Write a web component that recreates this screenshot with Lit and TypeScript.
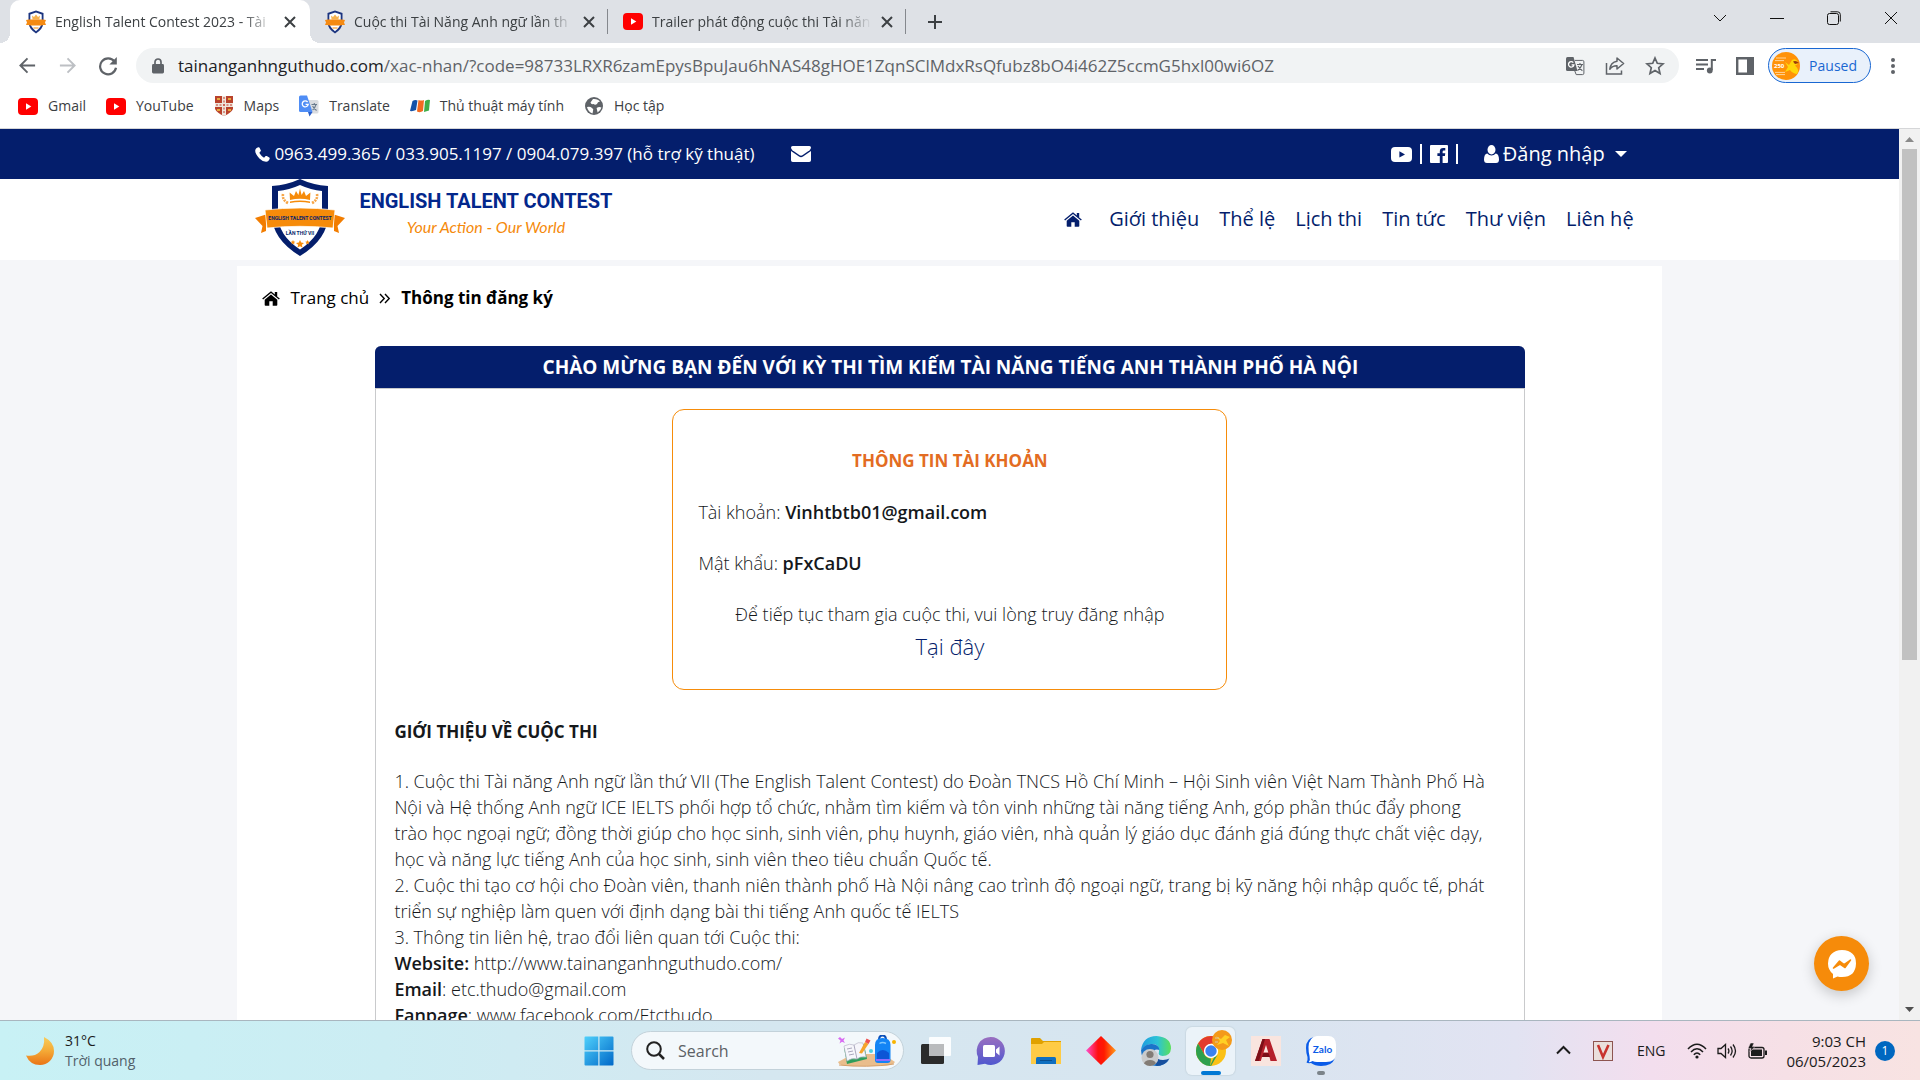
import { LitElement, html, css, svg } from "lit";
import { customElement } from "lit/decorators.js";

const crest = html`<svg class="crest" viewBox="0 0 20 24" width="20" height="24" aria-hidden="true">
  <path d="M10 0.5 L17.5 3 V13 Q17 19 10 23.5 Q3 19 2.5 13 V3 Z" fill="#1c3580" />
  <path d="M10 2.6 L15.7 4.5 V13 Q15 17.6 10 21.2 Q5 17.6 4.3 13 V4.5 Z" fill="#fff" />
  <path d="M6 5.5 l2 1.5 2-2.6 2 2.6 2-1.5 -.6 4 h-6.8z" fill="#f6b24e" />
  <path d="M0 10 L3 9.4 H17 L20 10 19 12.6 20 15 H17 L16.6 15.4 H3.4 L3 15 H0 L1 12.6Z" fill="#f58a12" />
  <path d="M7.5 18h5" stroke="#f6a94e" stroke-width="1.4" />
</svg>`;

const youtube = html`<svg viewBox="0 0 20 17" width="20" height="17" aria-hidden="true">
  <rect width="20" height="17" rx="4" fill="#f00" />
  <path d="M8 5.2 L13.3 8.5 L8 11.8Z" fill="#fff" />
</svg>`;

const closeX = html`<svg viewBox="0 0 12 12" width="12" height="12" aria-hidden="true">
  <path d="M1 1 L11 11 M11 1 L1 11" stroke="#3c4043" stroke-width="2" fill="none" />
</svg>`;

const homeIcon = html`<svg viewBox="0 0 18 15" width="18" height="15" fill="currentColor" aria-hidden="true">
  <path d="M9 3.6 L15.3 8.8 V14 Q15.3 14.8 14.5 14.8 H10.7 V10.2 H7.3 V14.8 H3.5 Q2.7 14.8 2.7 14 V8.8Z" />
  <path d="M9 0.3 L12.8 3.4 V1 H15.2 V5.4 L17.8 7.5 L16.9 8.6 L9 2.1 L1.1 8.6 L0.2 7.5Z" />
</svg>`;

const stroke = (d: string, w: number, width = 1.8, vb = 20) =>
  html`<svg viewBox="0 0 ${vb} ${vb}" width=${w} height=${w} fill="none" stroke="currentColor" stroke-width=${width} aria-hidden="true">
    <path d=${d} />
  </svg>`;

@customElement("browser-chrome")
export class BrowserChrome extends LitElement {
  static styles = css`
    :host {
      display: block;
      font: 14px/20px "Open Sans", "Noto Sans", sans-serif;
      color: #3c4043;
      background: #fff;
      border-bottom: 1px solid #d5d6d8;
    }
    svg { display: block; flex: none; }
    button, a { color: inherit; font: inherit; text-decoration: none; }
    button { border: 0; padding: 0; background: none; display: flex; }
    .strip { display: flex; height: 43px; background: #dee1e6; padding-left: 10px; }
    .tab {
      box-sizing: border-box;
      display: flex;
      align-items: center;
      width: 297px;
      padding: 0 12px 0 15px;
      gap: 9px;
    }
    .tab.active { position: relative; width: 300px; padding: 0 14px 0 16px; background: #fff; border-radius: 10px 10px 0 0; }
    .tab.active::before, .tab.active::after {
      content: "";
      position: absolute;
      bottom: 0;
      width: 10px;
      height: 10px;
    }
    .tab.active::before { left: -10px; background: radial-gradient(circle at 0 0, transparent 10px, #fff 10px); }
    .tab.active::after { right: -10px; background: radial-gradient(circle at 100% 0, transparent 10px, #fff 10px); }
    .tab .name {
      flex: 1;
      white-space: nowrap;
      -webkit-mask-image: linear-gradient(90deg, #000 85%, transparent);
      mask-image: linear-gradient(90deg, #000 85%, transparent);
    }
    .divider { align-self: center; width: 1px; height: 25px; background: #85888d; }
    .plus { align-self: center; margin-left: 21px; }
    .window { margin-left: auto; display: flex; gap: 43px; padding: 11px 22px 0 0; color: #111; align-items: flex-start; }
    .toolbar { display: flex; align-items: center; height: 45px; padding: 0 10px 0 18px; color: #5f6368; }
    .nav { display: flex; gap: 21px; margin-right: 18px; }
    .off { color: #bdc0c4; }
    .omnibox {
      flex: 1;
      display: flex;
      align-items: center;
      height: 35px;
      border-radius: 18px;
      background: #f1f3f4;
      padding: 0 14px 0 16px;
      gap: 14px;
    }
    .address { flex: 1; position: relative; display: flex; min-width: 0; }
    .address input {
      flex: 1;
      border: 0;
      outline: 0;
      background: none;
      padding: 0;
      font: 17px/24px "Open Sans", "Noto Sans", sans-serif;
      color: transparent;
    }
    .address .shown {
      position: absolute;
      inset: 0;
      font-size: 17px;
      line-height: 24px;
      white-space: nowrap;
      pointer-events: none;
    }
    .shown b { font-weight: 400; color: #202124; }
    .actions { display: flex; gap: 20px; }
    .side { display: flex; align-items: center; gap: 20px; margin: 0 14px 0 17px; }
    .paused {
      align-items: center;
      gap: 9px;
      box-sizing: border-box;
      height: 35px;
      padding: 0 13px 0 3px;
      border: 1px solid #1967d2;
      border-radius: 18px;
      background: #e9f1fb;
      color: #1967d2;
      font-size: 14px;
    }
    .dots { margin-left: 5px; }
    .marks { display: flex; align-items: flex-start; gap: 20px; height: 40px; padding: 0 18px; }
    .marks a { display: flex; align-items: center; gap: 10px; height: 36px; }
  `;

  private tab(name: string, icon: unknown, cls = "") {
    return html`<div class="tab ${cls}">
      ${icon}<span class="name">${name}</span>
      <button aria-label="Close tab">${closeX}</button>
    </div>`;
  }

  render() {
    return html`
      <div class="strip">
        ${this.tab("English Talent Contest 2023 - Tài", crest, "active")}
        ${this.tab("Cuộc thi Tài Năng Anh ngữ lần th", crest)}
        <span class="divider"></span>
        ${this.tab("Trailer phát động cuộc thi Tài năn", youtube)}
        <span class="divider"></span>
        <button class="plus" aria-label="New tab">${stroke("M8 1 V15 M1 8 H15", 16, 2, 16)}</button>
        <div class="window">
          <button aria-label="Search tabs">${stroke("M1 4 L7 10 L13 4", 14, 1, 14)}</button>
          <button aria-label="Minimize">${stroke("M0 7.5 H14", 14, 1, 14)}</button>
          <button aria-label="Restore">
            ${stroke("M2.5 2.5 H9.5 Q11.5 2.5 11.5 4.5 V11.5 Q11.5 13.5 9.5 13.5 H2.5 Q.5 13.5 .5 11.5 V4.5 Q.5 2.5 2.5 2.5Z M3.5 .8 H10.5 Q13.3 .8 13.3 3.5 V10.5", 14, 1, 14)}
          </button>
          <button aria-label="Close">${stroke("M1 1 L13 13 M13 1 L1 13", 14, 1, 14)}</button>
        </div>
      </div>
      <div class="toolbar">
        <div class="nav">
          <button aria-label="Back">${stroke("M18 10 H3 M10 2.5 L2.5 10 L10 17.5", 19, 2)}</button>
          <button class="off" aria-label="Forward">${stroke("M2 10 H17 M10 2.5 L17.5 10 L10 17.5", 19, 2)}</button>
          <button aria-label="Reload">
            <svg viewBox="0 0 20 20" width="20" height="20" fill="none" stroke="currentColor" stroke-width="2.2" aria-hidden="true">
              <path d="M16.5 5.5 A8 8 0 1 0 18 11.8" />
              <path d="M18.8 1 V8.4 H11.4Z" fill="currentColor" stroke="none" />
            </svg>
          </button>
        </div>
        <div class="omnibox">
          <svg viewBox="0 0 12 16" width="12" height="16" aria-hidden="true">
            <rect y="6" width="12" height="9.5" rx="1.4" fill="#5f6368" />
            <path d="M3 6.5 V4 a3 3 0 0 1 6 0 V6.5" fill="none" stroke="#5f6368" stroke-width="1.7" />
          </svg>
          <label class="address">
            <input aria-label="Address" />
            <span class="shown"><b>tainanganhnguthudo.com</b>/xac-nhan/?code=98733LRXR6zamEpysBpuJau6hNAS48gHOE1ZqnSClMdxRsQfubz8bO4i462Z5ccmG5hxl00wi6OZ</span>
          </label>
          <div class="actions">
            <button aria-label="Translate page">
              <svg viewBox="0 0 20 20" width="20" height="20" aria-hidden="true">
                <path d="M2.5 1 H8.5 L12.5 15 H2.5 Q1 15 1 13.5 V2.5 Q1 1 2.5 1Z" fill="#5f6368" />
                <path d="M9.8 4.4 H17.5 Q18.9 4.4 18.9 5.8 V17.2 Q18.9 18.6 17.5 18.6 H11.2 L9.8 15" fill="none" stroke="#5f6368" />
                <path d="M8.3 6.6 A2.7 2.7 0 1 0 8.9 8.8 H6.6" fill="none" stroke="#fff" stroke-width="1.3" />
                <path d="M12 8.5 H18 M15 7 V8.5 M17 8.5 Q16 12 12.6 14.5 M13 10 Q15 13 17.4 14.8" fill="none" stroke="#5f6368" stroke-width="1.1" />
              </svg>
            </button>
            <button aria-label="Share">
              <svg viewBox="0 0 20 20" width="20" height="20" fill="none" stroke="#5f6368" stroke-width="1.5" aria-hidden="true">
                <path d="M1.5 7 V18 H16.5 V14.5" />
                <path d="M12 2 L18.6 7.5 L12 13 V9.8 Q7.5 9.6 4.8 13.2 Q5.6 6.2 12 5.2Z" stroke-linejoin="round" />
              </svg>
            </button>
            <button aria-label="Bookmark">${stroke("M10 2 L12.3 7.3 L18 7.9 L13.7 11.7 L15 17.4 L10 14.4 L5 17.4 L6.3 11.7 L2 7.9 L7.7 7.3Z", 20, 1.7)}</button>
          </div>
        </div>
        <div class="side">
          <button aria-label="Media controls">
            <svg viewBox="0 0 20 18" width="20" height="18" fill="none" stroke="#5f6368" stroke-width="2" aria-hidden="true">
              <path d="M0 3 H12 M0 7.5 H12 M0 12 H8 M15.8 13 V3 H20" />
              <circle cx="13.8" cy="13.5" r="2.9" fill="#5f6368" stroke="none" />
            </svg>
          </button>
          <button aria-label="Side panel">
            <svg viewBox="0 0 18 18" width="18" height="18" aria-hidden="true">
              <path d="M0 0 H18 V18 H0Z M2.4 2.4 V15.6 H11 V2.4Z" fill="#5f6368" fill-rule="evenodd" />
            </svg>
          </button>
        </div>
        <button class="paused">
          <svg viewBox="0 0 28 28" width="28" height="28" aria-hidden="true">
            <circle cx="14" cy="14" r="14" fill="#ff9208" />
            <path d="M4 6 H14 M3 8.6 H12 M3 20.4 H13 M4 22.6 H13" stroke="#ffd49b" stroke-width="1" />
            <path d="M13 10 L17 13 L20 8 Q24 6 26 10 Q27 12 23 13.5 Q28 18 25 22 Q20 21 18 18 L13 20 L16 15Z" fill="#ffd60a" />
            <path d="M21 9.5 Q24 8 27 11 L23 12Z" fill="#9b3a0c" />
            <text x="2" y="16" font-family="Open Sans, sans-serif" font-size="6" font-weight="700" fill="#fff">250</text>
          </svg>
          Paused
        </button>
        <button class="dots" aria-label="Menu">
          <svg viewBox="0 0 34 18" width="34" height="18" fill="#5f6368" aria-hidden="true">
            <circle cx="17" cy="3" r="2" /><circle cx="17" cy="9" r="2" /><circle cx="17" cy="15" r="2" />
          </svg>
        </button>
      </div>
      <nav class="marks">
        <a href="#">${youtube}Gmail</a>
        <a href="#">${youtube}YouTube</a>
        <a href="#">
          <svg viewBox="0 0 20 20" width="20" height="20" aria-hidden="true">
            <path d="M1 0 H19 V13 Q17 17 10 20 Q3 17 1 13Z" fill="#b9422c" />
            <path d="M8 0 H12 V7 H19 V11 H12 V19 L10 20 L8 19 V11 H1 V7 H8Z" fill="#eee6dd" />
            <path d="M10 1 V18 M2 9 H18" stroke="#c23a2a" stroke-width="1" stroke-dasharray="2 1.5" />
            <path d="M3 3 h3 M14 3 h3 M3 14 h3 M14 14 h3" stroke="#e6a93f" stroke-width="2" />
          </svg>
          Maps
        </a>
        <a href="#">
          <svg viewBox="0 0 20 22" width="20" height="22" aria-hidden="true">
            <path d="M8 5 H18 Q19.5 5 19.5 6.5 V17 Q19.5 18.5 18 18.5 H11Z" fill="#dadce0" />
            <path d="M1.5 0.5 H8 L13.5 17 H1.5 Q0 17 0 15.5 V2 Q0 .5 1.5 .5Z" fill="#4f8df5" />
            <path d="M9 17 H13.5 L10.5 21.5Z" fill="#2a5fc9" />
            <path d="M8.6 7 A3 3 0 1 0 9.2 9.4 H6.6" fill="none" stroke="#fff" stroke-width="1.3" />
            <path d="M12.5 9.5 H18 M15.3 8 V9.5 M17 9.5 Q16 13 13.6 15 M13.6 11 Q15 14 17.6 15.5" fill="none" stroke="#6b7c8d" stroke-width="1.1" />
          </svg>
          Translate
        </a>
        <a href="#">
          <svg viewBox="0 0 20 14" width="20" height="14" aria-hidden="true">
            <path d="M2.500 2 Q5 .5 7.500 1.500 L6 11 Q3 12.500 0 12Z" fill="#1552a8" />
            <path d="M8.500 1 Q11.500 2 14 1 L13 12 Q10 14 7 12.500Z" fill="#f26a21" />
            <path d="M15 2 Q18 0 20 1 L19 11.500 Q16.500 12 14 13Z" fill="#3fae49" />
          </svg>
          Thủ thuật máy tính
        </a>
        <a href="#">
          <svg viewBox="0 0 20 20" width="20" height="20" aria-hidden="true">
            <circle cx="10" cy="10" r="9" fill="#5f6368" />
            <path d="M3 11 Q6 10 8 12 Q10 13 9 15 L8.5 17.4 Q4 16 3 11Z M9 3 Q14 2.6 16 5.6 Q13.5 6 13 8 Q11 9.5 9.6 8 Q7 8.6 6.5 6.5Z M12.6 12 Q15 10.5 17.4 11.5 Q16.5 15 13.6 16.4Z" fill="#fff" />
          </svg>
          Học tập
        </a>
      </nav>
    `;
  }
}

@customElement("contest-site")
export class ContestSite extends LitElement {
  static styles = css`
    :host {
      display: block;
      font: 300 18px/26px "Open Sans", "Noto Sans", sans-serif;
      color: #15181b;
      background: #f5f6f9;
    }
    svg { display: block; flex: none; }
    a { color: inherit; text-decoration: none; }
    button { border: 0; padding: 0; background: none; color: inherit; font: inherit; display: flex; }
    .wrap { box-sizing: border-box; width: 75%; max-width: 1425px; margin: 0 auto; padding: 0 18px; }
    .contact { background: #041e6c; color: #fff; font-weight: 400; }
    .contact .wrap { display: flex; align-items: center; height: 50px; }
    .phone { display: flex; align-items: center; gap: 4px; margin-right: 36px; font-size: 17px; }
    .social { margin-left: auto; margin-right: 17px; display: flex; align-items: center; gap: 8px; }
    .bar { width: 2px; height: 20px; background: #fff; }
    .login { align-items: center; gap: 4px; margin-left: 18px; font-size: 20px; line-height: 30px; }
    .login .caret { margin-left: 6px; }
    .brandbar { background: #fff; }
    .brandbar .wrap { display: flex; align-items: flex-start; height: 81px; }
    .brand { display: flex; gap: 14px; }
    .words { display: flex; flex-direction: column; align-items: center; padding-top: 8px; }
    .name { font: bold 20px/28px "Roboto", sans-serif; color: #03278c; white-space: nowrap; }
    .motto { font: italic 400 16px/24px "Lato", cursive; color: #f58a0b; white-space: nowrap; }
    .menu { margin-left: auto; padding: 25px 10px 0 0; display: flex; align-items: center; gap: 20px; color: #041e6c; font-weight: 400; font-size: 20px; line-height: 30px; }
    .menu .home { margin-right: 7px; }
    .body { margin-top: 6px; background: #fff; min-height: 1200px; padding: 19px 25px 0; }
    .crumbs { display: flex; align-items: center; gap: 10px; color: #000; font-size: 17px; font-weight: 400; }
    .card { width: 1150px; max-width: 100%; box-sizing: border-box; margin: 35px auto 0; margin-left: 113px; border: 1px solid #c9cacc; border-top: 0; border-radius: 6px 6px 0 0; }
    .card h1 {
      margin: 0 -1px;
      background: #041e6c;
      color: #fff;
      border-radius: 6px 6px 0 0;
      border-bottom: 1px solid #c9cacc;
      font-size: 19px;
      font-weight: 700;
      line-height: 26px;
      padding: 8px 0;
      text-align: center;
    }
    .content { padding: 20px 19px 20px 18px; }
    .account {
      box-sizing: border-box;
      width: 555px;
      max-width: 100%;
      margin: 0 auto 29px;
      border: 1px solid #f68c0a;
      border-radius: 12px;
      padding: 38px 25px 24px;
      display: grid;
      row-gap: 25px;
    }
    .account h2 { margin: 0; color: #e36c22; font-size: 17px; font-weight: 700; line-height: 26px; text-align: center; }
    .account p { margin: 0; }
    .account .go { text-align: center; }
    .go a { display: block; color: #041e6c; font-size: 22px; line-height: 38px; }
    h3 { margin: 0 0 23px; font-size: 17px; line-height: 26px; }
    .text { margin: 0; white-space: nowrap; }
    b { font-weight: 600; }
    .crumbs b { font-weight: 700; }
  `;

  render() {
    return html`
      <div class="contact">
        <div class="wrap">
          <span class="phone">
            <svg viewBox="0 0 15 15" width="15" height="15" aria-hidden="true">
              <path d="M3.4 .3 Q4.3 0 4.7 .9 L5.9 3.4 Q6.1 4 5.4 4.6 L4.5 5.4 Q4.3 5.8 4.9 6.8 Q6.4 9.2 8.6 10.4 Q9.2 10.8 9.6 10.3 L10.6 9.1 Q11 8.7 11.7 9.1 L14.3 10.6 Q14.9 11 14.7 11.6 Q14 14.6 11.2 14.8 Q8 14.9 4.4 11.4 Q.2 7.2 .2 3.8 Q.4 1 3.4 .3Z" fill="#fff" />
            </svg>
            0963.499.365 / 033.905.1197 / 0904.079.397 (hỗ trợ kỹ thuật)
          </span>
          <a href="#" aria-label="Email">
            <svg viewBox="0 0 20 16" width="20" height="16" fill="#fff" aria-hidden="true">
              <path d="M1.6 0 H18.4 Q20 0 20 1.6 Q20 3 18.6 4.2 L11.4 9.3 Q10 10.2 8.6 9.3 L1.4 4.2 Q0 3 0 1.6 Q0 0 1.6 0Z" />
              <path d="M0 5 L8 10.6 Q10 11.9 12 10.6 L20 5 V14.2 Q20 16 18.2 16 H1.8 Q0 16 0 14.2Z" />
            </svg>
          </a>
          <div class="social">
            <a href="#" aria-label="YouTube">
              <svg viewBox="0 0 21 15" width="21" height="15" aria-hidden="true">
                <rect width="21" height="15" rx="4" fill="#fff" /><path d="M8.4 4.3 L14 7.5 L8.4 10.6Z" fill="#041e6c" />
              </svg>
            </a>
            <span class="bar"></span>
            <a href="#" aria-label="Facebook">
              <svg viewBox="0 0 18 18" width="18" height="18" aria-hidden="true">
                <rect width="18" height="18" rx="1" fill="#fff" />
                <path d="M9.8 18 V11 H7.4 V8.3 H9.8 V6.4 Q9.8 3 13.2 3 H15.3 V5.6 H13.8 Q12.6 5.6 12.6 6.8 V8.3 H15.3 L14.9 11 H12.6 V18Z" fill="#041e6c" />
              </svg>
            </a>
            <span class="bar"></span>
            <button class="login">
              <svg viewBox="0 0 15 18" width="15" height="18" fill="#fff" aria-hidden="true">
                <ellipse cx="7.5" cy="4.8" rx="4" ry="4.7" />
                <path d="M3.3 8.4 Q5 10.5 7.5 10.5 Q10 10.5 11.7 8.4 Q15 9 15 14.5 Q15 18 12 18 H3 Q0 18 0 14.5 Q0 9 3.3 8.4Z" />
              </svg>
              Đăng nhập
              <svg class="caret" viewBox="0 0 12 6" width="12" height="6" aria-hidden="true"><path d="M0 0 H12 L6 6Z" fill="#fff" /></svg>
            </button>
          </div>
        </div>
      </div>
      <header class="brandbar">
        <div class="wrap">
          <a class="brand" href="#">
            <svg viewBox="0 0 90 77" width="90" height="77" aria-hidden="true">
              <path d="M45 0 Q58 6 73 7 V36 Q73 60 45 77 Q17 60 17 36 V7 Q32 6 45 0Z" fill="#041e6c" />
              <path d="M45 6 Q56 11 67 12 V36 Q67 56 45 70.5 Q23 56 23 36 V12 Q34 11 45 6Z" fill="#fff" />
              <path d="M35 21 L34.6 13.6 L39 17 L41 12 L43.4 16 L45 9.4 L46.6 16 L49 12 L51 17 L55.4 13.6 L55 21 Q45 18.6 35 21Z M35 22.6 Q45 20.4 55 22.6 V24 Q45 21.8 35 24Z" fill="#f68b0a" />
              <path d="M33 24 Q27 21 28 15 M57 24 Q63 21 62 15" fill="none" stroke="#f6a548" stroke-width="2.6" stroke-dasharray="2 1" />
              <path d="M0 39 L11 35.5 V52 L6 54 L7.5 47Z M90 39 L79 35.5 V52 L84 54 L82.5 47Z" fill="#f27d00" />
              <path d="M10 31 Q45 27 80 31 L78 49 Q45 45.6 12 49Z" fill="#f68b0a" stroke="#fff" stroke-width=".7" />
              <text x="45" y="40.500" text-anchor="middle" font-family="Roboto, sans-serif" font-weight="700" font-size="5" fill="#041e6c">ENGLISH TALENT CONTEST</text>
              <text x="45" y="56" text-anchor="middle" font-family="Roboto, sans-serif" font-weight="700" font-size="5" fill="#041e6c">LẦN THỨ VII</text>
              <path d="M45 61 l1.2 2.6 2.8.3-2.1 1.9.6 2.8-2.5-1.4-2.5 1.4.6-2.8-2.1-1.9 2.8-.3Z M38 61 l.7 1.5 1.6.2-1.2 1.1.3 1.6-1.4-.8-1.4.8.3-1.6-1.2-1.1 1.6-.2Z M52.500 61 l.7 1.5 1.6.2-1.2 1.1.3 1.6-1.4-.8-1.4.8.3-1.6-1.2-1.1 1.600-.2Z" fill="#f68b0a" />
            </svg>
            <span class="words"><span class="name">ENGLISH TALENT CONTEST</span><span class="motto">Your Action - Our World</span></span>
          </a>
          <nav class="menu">
            <a class="home" href="#" aria-label="Trang chủ">${homeIcon}</a>
            ${["Giới thiệu", "Thể lệ", "Lịch thi", "Tin tức", "Thư viện", "Liên hệ"].map((t) => html`<a href="#">${t}</a>`)}
          </nav>
        </div>
      </header>
      <main class="wrap body">
        <nav class="crumbs">
          ${homeIcon}<a href="#">Trang chủ</a>
          <svg viewBox="0 0 12 11" width="12" height="11" fill="none" stroke="currentColor" stroke-width="1.4" aria-hidden="true">
            <path d="M1 1 L5.200 5.500 L1 10 M6 1 L10.200 5.500 L6 10" />
          </svg>
          <b>Thông tin đăng ký</b>
        </nav>
        <section class="card">
          <h1>CHÀO MỪNG BẠN ĐẾN VỚI KỲ THI TÌM KIẾM TÀI NĂNG TIẾNG ANH THÀNH PHỐ HÀ NỘI</h1>
          <div class="content">
            <div class="account">
              <h2>THÔNG TIN TÀI KHOẢN</h2>
              <p>Tài khoản: <b>Vinhtbtb01@gmail.com</b></p>
              <p>Mật khẩu: <b>pFxCaDU</b></p>
              <p class="go">Để tiếp tục tham gia cuộc thi, vui lòng truy đăng nhập<a href="#">Tại đây</a></p>
            </div>
            <h3>GIỚI THIỆU VỀ CUỘC THI</h3>
            <p class="text">
              1. Cuộc thi Tài năng Anh ngữ lần thứ VII (The English Talent Contest) do Đoàn TNCS Hồ Chí Minh – Hội Sinh viên Việt Nam Thành Phố Hà<br />
              Nội và Hệ thống Anh ngữ ICE IELTS phối hợp tổ chức, nhằm tìm kiếm và tôn vinh những tài năng tiếng Anh, góp phần thúc đẩy phong<br />
              trào học ngoại ngữ; đồng thời giúp cho học sinh, sinh viên, phụ huynh, giáo viên, nhà quản lý giáo dục đánh giá đúng thực chất việc dạy,<br />
              học và năng lực tiếng Anh của học sinh, sinh viên theo tiêu chuẩn Quốc tế.<br />
              2. Cuộc thi tạo cơ hội cho Đoàn viên, thanh niên thành phố Hà Nội nâng cao trình độ ngoại ngữ, trang bị kỹ năng hội nhập quốc tế, phát<br />
              triển sự nghiệp làm quen với định dạng bài thi tiếng Anh quốc tế IELTS<br />
              3. Thông tin liên hệ, trao đổi liên quan tới Cuộc thi:<br />
              <b>Website:</b> http://www.tainanganhnguthudo.com/<br />
              <b>Email</b>: etc.thudo@gmail.com<br />
              <b>Fanpage</b>: www.facebook.com/Etcthudo
            </p>
          </div>
        </section>
      </main>
    `;
  }
}

@customElement("task-bar")
export class TaskBar extends LitElement {
  static styles = css`
    :host {
      display: grid;
      grid-template-columns: 1fr auto 1fr;
      align-items: center;
      box-sizing: border-box;
      height: 60px;
      border-top: 1px solid #a9b6bf;
      background: linear-gradient(90deg, #c8f1f5 0%, #ccedf3 20%, #d5e7f0 40%, #d8e5f0 65%, #e2e3f2 79%, #f3deee 86%, #f6e0e6 93%, #f8e3e2 100%);
      font: 14px/20px "Open Sans", "Noto Sans", sans-serif;
      color: #1b1b1b;
    }
    svg { display: block; flex: none; }
    button { border: 0; padding: 0; background: none; font: inherit; color: inherit; display: flex; }
    .weather { justify-self: start; align-items: center; gap: 11px; padding-left: 26px; text-align: left; }
    .weather small { display: block; font-size: 14px; color: #52606a; }
    .apps { display: flex; align-items: center; padding-left: 12px; }
    .find {
      box-sizing: border-box;
      display: flex;
      align-items: center;
      width: 273px;
      height: 39px;
      margin: 0 4px 0 17px;
      padding: 0 6px 0 14px;
      gap: 13px;
      border: 1px solid #c3d2da;
      border-radius: 20px;
      background: #f3f8fb;
    }
    .find input { flex: 1; min-width: 0; border: 0; outline: 0; padding: 0; background: none; font: 16px/24px "Open Sans", sans-serif; color: #555; }
    .find input::placeholder { color: #5c6165; opacity: 1; }
    .app { position: relative; width: 55px; height: 48px; align-items: center; justify-content: center; }
    .app.on::before {
      content: "";
      position: absolute;
      z-index: 0;
      inset: 0 3px;
      border-radius: 6px;
      background: #ebf3f9;
      box-shadow: 0 0 1px 1px #cbd9e3;
    }
    .app svg { position: relative; }
    .app.on::after, .app.run::after {
      content: "";
      position: absolute;
      bottom: 0;
      left: 50%;
      margin-left: -10px;
      width: 20px;
      height: 4px;
      border-radius: 2px;
      background: #0078d4;
    }
    .app.run::after { width: 8px; margin-left: -4px; background: #7b8389; }
    .tray { justify-self: end; display: flex; align-items: center; padding-right: 25px; }
    .tray > * { margin-left: 10px; }
    .tray .v { margin-left: 22px; }
    .tray .lang { margin: 0 12px 0 24px; }
    .tray .clock { text-align: right; margin-left: 19px; display: block; font-size: 15px; }
    .tray .count {
      box-sizing: border-box;
      width: 20px;
      height: 20px;
      border-radius: 10px;
      background: #0067c0;
      color: #fff;
      font-size: 12px;
      justify-content: center;
      margin-left: 9px;
    }
  `;

  private app(name: string, art: unknown, cls = "") {
    return html`<button class="app ${cls}" aria-label=${name}>
      <svg viewBox="0 0 30 30" width="30" height="30" overflow="visible" aria-hidden="true">${art}</svg>
    </button>`;
  }

  render() {
    return html`
      <button class="weather">
        <svg viewBox="0 0 28 28" width="28" height="28" aria-hidden="true">
          <defs><linearGradient id="moon" x1="0" y1="0" x2="0" y2="1"><stop offset="0" stop-color="#f8cd5a" /><stop offset=".5" stop-color="#f4a936" /><stop offset="1" stop-color="#ea7416" /></linearGradient></defs>
          <path d="M18 0 Q28 5 28 14 A14 14 0 0 1 14 28 Q4 28 0 18.500 Q8 20 13.500 15 Q19 9.500 18 0Z" fill="url(#moon)" />
        </svg>
        <span>31°C<small>Trời quang</small></span>
      </button>
      <div class="apps">
        <button aria-label="Start">
          <svg viewBox="0 0 30 30" width="30" height="30" aria-hidden="true">
            <defs><linearGradient id="win" x1="0" y1="0" x2="1" y2="1"><stop offset="0" stop-color="#4fd0fb" /><stop offset="1" stop-color="#0068c8" /></linearGradient></defs>
            <path d="M1.500 .5 H14.300 V14.300 H.5 V1.500 Q.5 .5 1.500 .5Z M15.500 .5 H28.500 Q29.500 .5 29.500 1.500 V14.300 H15.500Z M.5 15.500 H14.300 V29.500 H1.500 Q.5 29.500 .5 28.500Z M15.500 15.500 H29.500 V28.500 Q29.500 29.500 28.500 29.500 H15.500Z" fill="url(#win)" />
          </svg>
        </button>
        <label class="find">
          <svg viewBox="0 0 19 19" width="19" height="19" fill="none" stroke="#222" stroke-width="2" aria-hidden="true"><circle cx="8" cy="8" r="6.800" /><path d="M13 13 L18 18" stroke-width="2.500" /></svg>
          <input type="search" placeholder="Search" aria-label="Search" />
          <svg viewBox="0 0 60 32" width="60" height="32" aria-hidden="true">
            <path d="M1 27 L16 19 H46 L58 27 Q56 31 44 31 H12 Q2 31 1 27Z" fill="#e9bd8c" />
            <path d="M2 30 Q30 33 57 29" stroke="#d59f6a" fill="none" />
            <path d="M7 13 L27 9 L30 24 L10 29Z" fill="#2e9e5b" />
            <path d="M7 11 Q13 8 17 10 Q21 6.500 26 8 L29 22 Q23 21 20 24 Q15 22.500 10 26Z" fill="#f6f6fb" stroke="#b9b7c9" stroke-width=".7" />
            <path d="M17 10 L20 24 M10 14 l5-1 M11 17 l5-1 M12 20 l5-1" stroke="#aaa8bd" />
            <path d="M22 18 L28 7 L31.500 9 L25 18.500Z" fill="#f6a52b" /><path d="M28 7 L29.500 3.500 L33.500 5.500 L31.500 9Z" fill="#ef5350" />
            <path d="M3 2 L5 4 L8 2.500 L6.500 5.500 L8 8 L5 6.800 L2.500 8.500 L3.500 5.500 L1 3.500Z" fill="#d86bf2" />
            <circle cx="34" cy="16" r="2" fill="#4dd0e1" /><circle cx="57" cy="7" r="2" fill="#f8b400" />
            <path d="M42 5 Q42 .5 45.500 .5 Q49 .5 49 5" fill="none" stroke="#0b4fb8" stroke-width="2" />
            <path d="M38 10 Q38 3 45.500 3 Q53.500 3 53.500 10 V25 Q53.500 28 50.500 28 H41 Q38 28 38 25Z" fill="#1284f5" />
            <path d="M40 18 Q45.500 12 52 18 V24 H40Z" fill="#0d55d6" /><path d="M39 25 H53" stroke="#8e6bff" stroke-width="2" />
            <path d="M42.500 8.500 Q45.500 6.500 49 8.500" fill="none" stroke="#7cc6ff" stroke-width="1.500" />
          </svg>
        </label>
        ${this.app("Task view", svg`<rect x="0" y="8" width="23" height="20" rx="1.500" fill="#2b2b2b" /><rect x="8" y="1" width="22" height="19" rx="1" fill="#fff" opacity=".9" /><path d="M8 8 H23 V20 H8Z" fill="#b9bbbd" />`)}
        ${this.app("Chat", svg`<defs><linearGradient id="chat" x1="0" y1="0" x2="0" y2="1"><stop offset="0" stop-color="#9a6fc0" /><stop offset="1" stop-color="#5058cf" /></linearGradient></defs>
          <path d="M15 1 A14 14 0 1 1 9 27.700 L1.500 29 L2 21 A14 14 0 0 1 15 1Z" fill="url(#chat)" />
          <rect x="7" y="9" width="12" height="12" rx="1.500" fill="#fff" /><path d="M20 13.500 L23.500 10.500 V19.500 L20 16.500Z" fill="#fff" />`)}
        ${this.app("File Explorer", svg`<path d="M0 3 Q0 2 1 2 H9 L12 5 H30 V12 H0Z" fill="#e0a100" /><path d="M0 8 H11 L13 6 H30 V28 H0Z" fill="#fecb45" />
          <path d="M5 28 V22.500 Q5 21 6.500 21 H23.500 Q25 21 25 22.500 V28Z" fill="#0f6fc0" /><path d="M9 24.500 H21" stroke="#0a4f8f" />`)}
        ${this.app("Diamond", svg`<defs><linearGradient id="dia"><stop offset="0" stop-color="#ff4fd0" /><stop offset=".4" stop-color="#ff1010" /><stop offset=".6" stop-color="#ff1a00" /><stop offset="1" stop-color="#ff9c1a" /></linearGradient></defs>
          <path d="M15 0 L30 14.500 L15 29 L0 14.500Z" fill="url(#dia)" />`)}
        ${this.app("Edge", svg`<defs><linearGradient id="edge"><stop offset="0" stop-color="#1e9be0" /><stop offset=".55" stop-color="#2cc3d6" /><stop offset="1" stop-color="#5be05a" /></linearGradient></defs>
          <path d="M0 14 Q2 0 15.500 0 Q30 1 30 12.500 Q29.500 20 21.500 20 Q16.500 19.500 18 16 Q19 8 11 8 Q4 8 0 14Z" fill="url(#edge)" />
          <path d="M0 14 Q4 7.500 11 8 Q18 8.500 18.500 14 Q12 12 12.500 19 Q14 26 22 26 Q25 26 28 24 Q23 30 15 30 Q1 29 0 14Z" fill="#1a74c9" />
          <path d="M12.500 19 Q16 24 22 24 Q26 23.500 28.500 22.500 Q24 30 15.500 30Z" fill="#164f9d" />
          <circle cx="9" cy="21.500" r="8.500" fill="#c9cbcc" /><circle cx="9" cy="18.500" r="3.600" fill="#827c76" /><path d="M3 27.500 Q4 24 9 24 Q14 24 15 27.500 Q12 30 9 30 Q6 30 3 27.500Z" fill="#827c76" />`)}
        ${this.app("Chrome", svg`<circle cx="15" cy="15" r="15" fill="#fbc116" />
          <path d="M2 7.500 A15 15 0 0 1 28 7.500 H15 L8.500 18.700Z" fill="#e33b2e" />
          <path d="M2 7.500 L8.500 18.700 Q11 22.500 15 22.500 L14 30 A15 15 0 0 1 2 7.500Z" fill="#2da04e" />
          <path d="M21.500 18.700 L15 30 H14 L18 21.500Z" fill="#2da04e" />
          <circle cx="15" cy="15" r="7.200" fill="#fff" /><circle cx="15" cy="15" r="5.700" fill="#3b82f0" />
          <svg x="16" y="-6" width="20" height="20" viewBox="0 0 20 20" overflow="visible">
            <circle cx="10" cy="10" r="10" fill="#f49a1a" />
            <path d="M4 6 L9 9 L13 5 L18 7 L14 10 L17 16 L11 13 L5 15 L8 11Z" fill="#ffd024" /><path d="M3 8 h4 M3 12 h3" stroke="#d9c9a8" />
          </svg>`, "on")}
        ${this.app("AutoCAD", svg`<rect width="30" height="30" fill="#f9e5df" /><path d="M4 25 L11.500 3 H18.500 L26 25 H19.500 L18.500 21 H11 L9.800 25Z M12.500 16.500 H17.300 L15 9Z" fill="#b5202b" fill-rule="evenodd" /><path d="M11.500 3 H14 L8 25 H4Z M11 21 H19 L17.300 17 H12.500Z" fill="#7c1018" />`)}
        ${this.app("Zalo", svg`<path d="M9 1 Q0 2 0 12 Q0 17 1.500 21 Q2 24 .5 26.500 Q2 27.500 5 27 Q9 30 15 30 Q26 30 28.500 23Z" fill="#0a5be8" /><path d="M11 0 H22 Q30 0 30 9 V17 Q30 26 20 26 H11 Q8.500 26 6.500 25 Q4.500 26.500 2.800 26 Q4.500 24 3.500 20 Q2.500 17 2.500 11 Q3 1 11 0Z" fill="#fff" />
          <text x="16.500" y="17" text-anchor="middle" font-family="Lato, sans-serif" font-weight="700" font-size="10" fill="#0a5be8">Zalo</text>`, "run")}
      </div>
      <div class="tray">
        <button aria-label="Hidden icons">${stroke("M1 10.500 L7.500 4 L14 10.500", 15, 2, 15)}</button>
        <button class="v" aria-label="Vietnamese keyboard">
          <svg viewBox="0 0 20 20" width="20" height="20" aria-hidden="true">
            <rect x=".5" y=".5" width="19" height="19" fill="#eadfdc" stroke="#8d5550" /><path d="M5 4 L10 16 L15.500 4" fill="none" stroke="#c8332e" stroke-width="2.600" />
          </svg>
        </button>
        <button class="lang">ENG</button>
        <button aria-label="Wi-Fi">
          <svg viewBox="0 0 20 16" width="20" height="16" fill="none" stroke="#1b1b1b" stroke-width="1.500" aria-hidden="true">
            <path d="M1 6 Q10 -3.500 19 6 M4 9 Q10 2.500 16 9 M6.800 11.800 Q10 8.200 13.200 11.800" /><circle cx="10" cy="14" r="1.600" fill="#1b1b1b" stroke="none" />
          </svg>
        </button>
        <button aria-label="Volume">
          <svg viewBox="0 0 20 18" width="20" height="18" fill="none" stroke="#1b1b1b" stroke-width="1.300" aria-hidden="true">
            <path d="M1 6.500 H4 L8.500 2.500 V15.500 L4 11.500 H1Z M11 6.500 Q12.800 9 11 11.500 M13.500 4.500 Q16.800 9 13.500 13.500 M16 2.500 Q21 9 16 15.500" />
          </svg>
        </button>
        <button aria-label="Battery">
          <svg viewBox="0 0 20 16" width="20" height="16" aria-hidden="true">
            <rect x="2" y="4.500" width="15" height="10.500" rx="2" fill="none" stroke="#1b1b1b" stroke-width="1.300" /><rect x="4" y="6.500" width="11" height="6.500" fill="#1b1b1b" /><path d="M18 7.500 H20 V12 H18Z" fill="#1b1b1b" />
            <path d="M3.500 0 H7 L5.500 3.500 H8 L3 9 L4 5.500 H1Z" fill="#1b1b1b" stroke="#f6e0e9" stroke-width=".5" />
          </svg>
        </button>
        <button class="clock">9:03 CH<br />06/05/2023</button>
        <button class="count">1</button>
      </div>
    `;
  }
}

@customElement("app-root")
export class AppRoot extends LitElement {
  static styles = css`
    :host { display: flex; flex-direction: column; height: 100vh; }
    .view { position: relative; flex: 1; min-height: 0; display: flex; overflow: hidden; background: #f5f6f9; }
    .page { flex: 1; min-width: 0; overflow: hidden; }
    .scroll {
      display: flex;
      flex-direction: column;
      align-items: center;
      width: 21px;
      padding: 8px 0;
      box-sizing: border-box;
      background: #f1f1f1;
      gap: 7px;
    }
    .track { flex: 1; align-self: stretch; padding: 0 3px; }
    .thumb { height: 60%; background: #c1c1c1; }
    .chat {
      position: absolute;
      right: 51px;
      bottom: 29px;
      width: 55px;
      height: 55px;
      padding: 0;
      border: 0;
      border-radius: 50%;
      background: #f68b0a;
      display: grid;
      place-items: center;
      box-shadow: 0 4px 14px rgba(0, 0, 0, 0.2);
    }
    svg { display: block; }
  `;

  render() {
    return html`
      <browser-chrome></browser-chrome>
      <div class="view">
        <div class="page"><contest-site></contest-site></div>
        <div class="scroll" aria-hidden="true">
          <svg viewBox="0 0 9 5" width="9" height="5"><path d="M0 5 L4.500 0 L9 5Z" fill="#8a8a8a" /></svg>
          <div class="track"><div class="thumb"></div></div>
          <svg viewBox="0 0 9 5" width="9" height="5"><path d="M0 0 L4.500 5 L9 0Z" fill="#505050" /></svg>
        </div>
        <button class="chat" aria-label="Messenger">
          <svg viewBox="0 0 30 30" width="30" height="30" aria-hidden="true">
            <path d="M15 1 Q29 1.500 29 14.500 Q28.500 28 15 28 Q12.500 28 10.500 27.400 L6 29.500 V25 Q1 21 1 14.500 Q1.500 1.500 15 1Z" fill="#fff" />
            <path d="M6.500 19 L12.500 12 L17 15.500 L23.500 11 L18 18.500 L13 15.200Z" fill="#f68b0a" stroke="#f68b0a" stroke-width="1.500" stroke-linejoin="round" />
          </svg>
        </button>
      </div>
      <task-bar></task-bar>
    `;
  }
}
